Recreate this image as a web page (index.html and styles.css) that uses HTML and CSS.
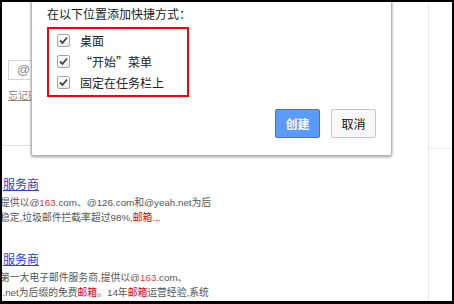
FILE: index.html
```html
<!DOCTYPE html>
<html lang="zh-CN">
<head>
    <meta charset="UTF-8">
    <title>创建应用程序快捷方式</title>
    <link rel="stylesheet" href="styles.css">
</head>
<body>
<div class="screen">
    <div class="page">
        <div class="main">
            <div class="login">
                <div class="account-input">@163.com</div>
                <a class="forgot" href="#">忘记密码？</a>
            </div>
            <div class="results">
                <div class="result">
                    <a class="result-title" href="#">服务商</a>
                    <p class="result-desc">
                        <span class="line">提供以@<em class="hl">163</em>.com、@126.com和@yeah.net为后</span>
                        <span class="line">稳定,垃圾邮件拦截率超过98%,<em class="kw">邮箱...</em></span>
                    </p>
                </div>
                <div class="result">
                    <a class="result-title" href="#">服务商</a>
                    <p class="result-desc">
                        <span class="line">第一大电子邮件服务商,提供以@<em class="hl">163</em>.com、</span>
                        <span class="line shift">h.net为后缀的免费<em class="kw">邮箱</em>。14年<em class="kw">邮箱</em>运营经验,系统</span>
                    </p>
                </div>
            </div>
        </div>
        <div class="side">
            <div class="side-top"></div>
        </div>

        <!-- shortcut dialog, overlays the page -->
        <div class="dialog">
            <h3 class="dialog-title">在以下位置添加快捷方式<span class="fw-colon">：</span></h3>
            <ul class="targets">
                <li class="target">
                    <span class="check"><svg width="11" height="11" viewBox="0 0 11 11"><polyline points="2,5.5 4.5,8 9,2.5" fill="none" stroke="#444" stroke-width="1.8"/></svg></span>
                    <span class="label">桌面</span>
                </li>
                <li class="target">
                    <span class="check"><svg width="11" height="11" viewBox="0 0 11 11"><polyline points="2,5.5 4.5,8 9,2.5" fill="none" stroke="#444" stroke-width="1.8"/></svg></span>
                    <span class="label"><span class="q-open">“</span>开始<span class="q-close">”</span>菜单</span>
                </li>
                <li class="target">
                    <span class="check"><svg width="11" height="11" viewBox="0 0 11 11"><polyline points="2,5.5 4.5,8 9,2.5" fill="none" stroke="#444" stroke-width="1.8"/></svg></span>
                    <span class="label">固定在任务栏上</span>
                </li>
            </ul>
            <div class="actions">
                <button class="btn btn-primary">创建</button>
                <button class="btn btn-default">取消</button>
            </div>
        </div>
    </div>
</div>
</body>
</html>
```

FILE: styles.css
```css
* {
    box-sizing: border-box;
}
body {
    margin: 0;
    font-family: "Noto Sans CJK SC", "Liberation Sans", sans-serif;
}
.screen {
    width: 454px;
    height: 304px;
    border: solid #000;
    border-width: 2px 2px 3px 2px;
    background: #fff;
}
.page {
    position: relative;
    height: 100%;
    display: grid;
    grid-template-columns: 1fr 24px;
    overflow: hidden;
}
.main {
    overflow: hidden;
}
.login {
    width: 300px;
    height: 144px;
    padding: 58px 0 0 6px;
    border-bottom: 1px solid #e3e3e3;
}
.account-input {
    width: 140px;
    height: 20px;
    padding-left: 8px;
    border: 1px solid #d4d4d4;
    font-family: "Liberation Sans", "Noto Sans CJK SC", sans-serif;
    font-size: 13px;
    line-height: 18px;
    color: #8a8a8a;
}
.forgot {
    display: inline-block;
    margin-top: 2px;
    font-size: 10px;
    line-height: 12px;
    color: #888;
}
.results {
    padding-top: 30px;
}
.result {
    margin-bottom: 26px;
}
.result-title {
    display: block;
    margin: 0 0 3px 1px;
    font-size: 12px;
    line-height: 16px;
    color: #2a3fd6;
}
.result-desc {
    margin: 0 0 0 -2px;
    font-family: "Liberation Sans", "Noto Sans CJK SC", sans-serif;
    font-size: 9.8px;
    line-height: 15px;
    color: #555;
    white-space: nowrap;
}
.line {
    display: block;
}
.shift {
    margin-left: -3px;
}
.hl {
    font-style: normal;
    color: #e8383d;
}
.kw {
    font-style: normal;
    color: #d00;
}
.side {
    border-left: 1px solid #e8e8e8;
}
.side-top {
    height: 147px;
    border-bottom: 1px solid #e8e8e8;
}

/* dialog */
.dialog {
    position: absolute;
    top: -10px;
    left: 29px;
    width: 361px;
    padding: 12px 15px 17px;
    background: #fff;
    border: 1px solid #b4b4b4;
    border-radius: 0 0 2px 2px;
    box-shadow: 0 1px 3px rgba(0, 0, 0, 0.4);
}
.dialog-title {
    margin: 0;
    font-size: 12px;
    font-weight: normal;
    line-height: 18px;
    color: #222;
}
.fw-colon {
    display: inline-block;
    width: 12px;
    text-align: center;
}
.targets {
    width: 142px;
    margin: 4px 0 0;
    padding: 1px 0 2px 8px;
    border: 2px solid #f00;
    list-style: none;
}
.target {
    display: flex;
    align-items: center;
    gap: 10px;
    height: 21px;
    font-size: 12px;
    color: #222;
}
.q-open,
.q-close {
    display: inline-block;
    width: 12px;
}
.q-open {
    text-align: right;
}
.q-close {
    text-align: left;
}
.check {
    display: flex;
    width: 13px;
    height: 13px;
    border: 1px solid #a6a6a6;
    border-radius: 2px;
    background: linear-gradient(#fff, #ececec);
}
.actions {
    display: flex;
    justify-content: flex-end;
    gap: 11px;
    margin-top: 12px;
}
.btn {
    width: 45px;
    height: 29px;
    padding: 0;
    border: 1px solid;
    border-radius: 2px;
    font-family: inherit;
    font-size: 12px;
}
.btn-primary {
    background: #5a9bf9;
    border-color: #3d73d9;
    color: #fff;
    font-weight: bold;
}
.btn-default {
    background: #f8f8f8;
    border-color: #c6c6c6;
    color: #111;
}
```
